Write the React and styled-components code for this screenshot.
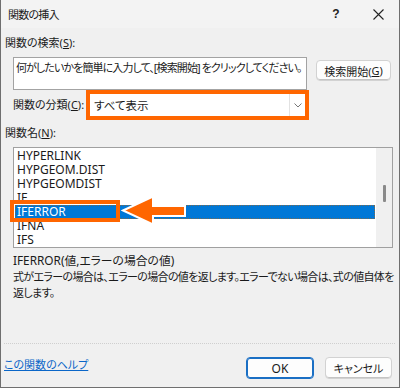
import React from "react";
import styled, { createGlobalStyle } from "styled-components";

const Global = createGlobalStyle`
  html, body { margin: 0; padding: 0; background: #f0f0f0; }
  body {
    font-family: "Noto Sans", "Noto Sans CJK JP", sans-serif;
    font-feature-settings: "palt" 1;
    color: #1a1a1a;
  }
`;

const ORANGE = "#ff6600";

const Dialog = styled.div`
  width: 400px;
  height: 388px;
  box-sizing: border-box;
  border: 1px solid #6f6f6f;
  border-top: none;
  background: #f0f0f0;
  display: flex;
  flex-direction: column;
`;

const TitleBar = styled.div`
  height: 28px;
  flex: none;
  background: #f3f3f3;
  display: flex;
  align-items: center;
  padding-left: 7px;
  font-size: 11px;
`;

const TitleText = styled.div`
  flex: 1;
  letter-spacing: -0.8px;
`;

const TitleButton = styled.div`
  width: 42px;
  height: 28px;
  display: flex;
  align-items: center;
  justify-content: center;
  font-size: 12px;
  font-weight: 600;
  color: #222;
  font-family: "Liberation Sans", sans-serif;
`;

const Content = styled.div`
  flex: 1;
  display: flex;
  flex-direction: column;
  padding: 0 6px 8px 4px;
`;

const Label = styled.div`
  font-size: 11px;
  line-height: 16px;
  margin-top: ${(p) => p.$mt || 0}px;
  white-space: nowrap;
  u { text-decoration: underline; text-underline-offset: 1px; }
`;

const SearchRow = styled.div`
  display: flex;
  align-items: flex-start;
  gap: 9px;
  margin: 6px 2px 0 8px;
`;

const SearchBox = styled.div`
  width: 294px;
  height: 33px;
  box-sizing: border-box;
  background: #fff;
  border: 1px solid #a3a3a3;
  padding: 2px 0 0 2px;
  font-size: 11px;
  line-height: 15px;
  letter-spacing: -0.9px;
  color: #222;
  white-space: nowrap;
  overflow: hidden;
`;

const Button = styled.div`
  width: ${(p) => p.$w}px;
  height: ${(p) => p.$h || 22}px;
  margin-top: ${(p) => p.$mt || 0}px;
  box-sizing: border-box;
  border-radius: 4px;
  background: #fdfdfd;
  border: 1px solid ${(p) => (p.$primary ? "#1a6fc4" : "#d2d2d2")};
  box-shadow: ${(p) => (p.$primary ? "inset 0 0 0 1px #1a6fc4" : "inset 0 -1px 0 #c4c4c4")};
  display: flex;
  align-items: center;
  justify-content: center;
  font-size: ${(p) => p.$fs || 11}px;
  color: #1a1a1a;
  white-space: nowrap;
  u { text-decoration: underline; text-underline-offset: 1px; }
`;

const CategoryRow = styled.div`
  display: flex;
  align-items: center;
  margin: 4px 0 0 8px;
`;

const CategoryLabel = styled(Label)`
  width: 77px;
`;

const Select = styled.div`
  width: 215px;
  height: 22px;
  box-sizing: border-box;
  background: #fff;
  outline: 4px solid ${ORANGE};
  display: flex;
  align-items: stretch;
`;

const SelectValue = styled.div`
  flex: 1;
  display: flex;
  align-items: center;
  padding-left: 4px;
  font-size: 11.5px;
`;

const SelectArrow = styled.div`
  width: 15px;
  border-left: 1px solid #e2e2e2;
  display: flex;
  align-items: center;
  justify-content: center;
`;

const ListBox = styled.div`
  position: relative;
  margin: 6px 0 0 8px;
  height: 101px;
  box-sizing: border-box;
  border: 1px solid #a0a0a0;
  background: #fff;
  display: flex;
`;

const Rows = styled.div`
  flex: 1;
  padding-top: 1px;
  overflow: hidden;
`;

const Row = styled.div`
  height: 14px;
  line-height: 14px;
  margin: 0 1px;
  padding-left: 2px;
  font-size: 12px;
  box-sizing: border-box;
  color: ${(p) => (p.$selected ? "#fff" : "#1a1a1a")};
  background: ${(p) => (p.$selected ? "#0078d7" : "transparent")};
  outline: ${(p) => (p.$selected ? "1px dotted #7a6a50" : "none")};
  outline-offset: -1px;
`;

const ScrollTrack = styled.div`
  width: 16px;
  background: #f0f0f0;
  display: flex;
  justify-content: center;
  padding-top: 37px;
  box-sizing: border-box;
`;

const ScrollThumb = styled.div`
  width: 3px;
  height: 17px;
  border-radius: 1px;
  background: #8a8a8a;
`;

const Highlight = styled.div`
  position: absolute;
  left: -4px;
  top: 52px;
  width: 110px;
  height: 22px;
  box-sizing: border-box;
  border: 4px solid ${ORANGE};
`;

const ArrowSvg = styled.svg`
  position: absolute;
  left: 104px;
  top: 45px;
`;

const Description = styled.div`
  margin: 4px 0 0 8px;
  font-size: 11px;
  line-height: 16px;
`;

const Syntax = styled.div`
  font-size: 11.8px;
`;

const DescBody = styled.div`
  margin-top: 1px;
  width: 382px;
  letter-spacing: -0.65px;
`;

const Separator = styled.div`
  margin-top: auto;
  border-top: 1px dotted #cfcfcf;
  margin-left: -1px;
  margin-right: -2px;
`;

const Footer = styled.div`
  display: flex;
  align-items: center;
  gap: 11px;
  margin: 13px 1px 0 -1px;
`;

const HelpLink = styled.a`
  flex: 1;
  font-size: 11px;
  color: #0a66c8;
  text-decoration: underline;
  margin-top: -8px;
`;

const items = [
  "HYPERLINK",
  "HYPGEOM.DIST",
  "HYPGEOMDIST",
  "IF",
  "IFERROR",
  "IFNA",
  "IFS",
];

export default function App() {
  return (
    <>
      <Global />
      <Dialog>
        <TitleBar>
          <TitleText>関数の挿入</TitleText>
          <TitleButton>?</TitleButton>
          <TitleButton>
            <svg width="11" height="11" viewBox="0 0 11 11">
              <path d="M0.5 0.5 L10.5 10.5 M10.5 0.5 L0.5 10.5" stroke="#222" strokeWidth="1.1" />
            </svg>
          </TitleButton>
        </TitleBar>
        <Content>
          <Label $mt={7}>
            関数の検索(<u>S</u>):
          </Label>
          <SearchRow>
            <SearchBox>何がしたいかを簡単に入力して、[検索開始] をクリックしてください。</SearchBox>
            <Button $w={75} $h={21} $mt={3}>
              検索開始(<u>G</u>)
            </Button>
          </SearchRow>
          <CategoryRow>
            <CategoryLabel>
              関数の分類(<u>C</u>):
            </CategoryLabel>
            <Select>
              <SelectValue>すべて表示</SelectValue>
              <SelectArrow>
                <svg width="8" height="5" viewBox="0 0 8 5">
                  <path d="M0.5 0.5 L4 4 L7.5 0.5" stroke="#777" strokeWidth="1" fill="none" />
                </svg>
              </SelectArrow>
            </Select>
          </CategoryRow>
          <Label $mt={9}>
            関数名(<u>N</u>):
          </Label>
          <ListBox>
            <Rows>
              {items.map((it) => (
                <Row key={it} $selected={it === "IFERROR"}>
                  {it}
                </Row>
              ))}
            </Rows>
            <ScrollTrack>
              <ScrollThumb />
            </ScrollTrack>
            <Highlight />
            <ArrowSvg width="72" height="34" viewBox="0 0 72 34">
              <path
                d="M5 17.5 L35 3.5 L35 13 L67 13 L67 23 L35 23 L35 31.5 Z"
                fill={ORANGE}
                stroke="#fff"
                strokeWidth="2"
                strokeLinejoin="miter"
              />
            </ArrowSvg>
          </ListBox>
          <Description>
            <Syntax>IFERROR(値,エラーの場合の値)</Syntax>
            <DescBody>
              式がエラーの場合は、エラーの場合の値を返します。エラーでない場合は、式の値自体を返します。
            </DescBody>
          </Description>
          <Separator />
          <Footer>
            <HelpLink href="#">この関数のヘルプ</HelpLink>
            <Button $w={68} $primary $fs={12}>
              OK
            </Button>
            <Button $w={67}>キャンセル</Button>
          </Footer>
        </Content>
      </Dialog>
    </>
  );
}
